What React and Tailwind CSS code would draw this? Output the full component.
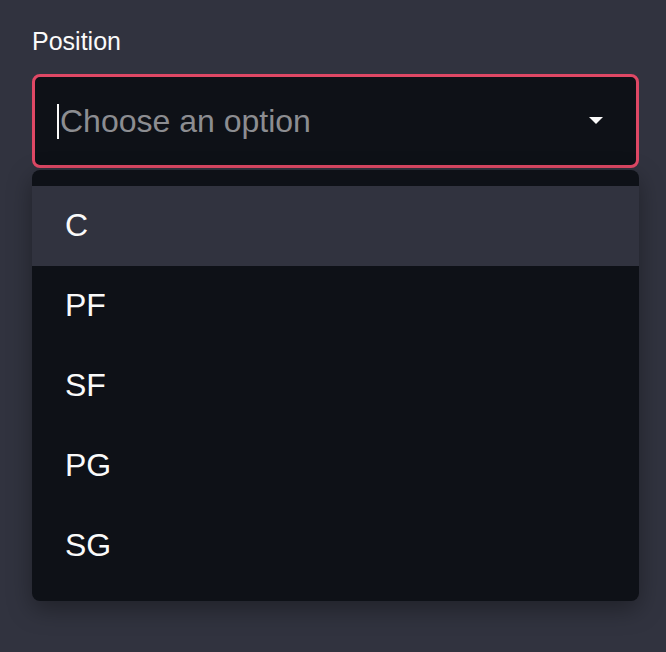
import React from 'react';

const options = ['C', 'PF', 'SF', 'PG', 'SG'];

export default function App() {
  return (
    <div
      className="w-[666px] h-[652px] bg-[#31333f] px-[32px] pt-[26px] overflow-hidden"
      style={{ fontFamily: '"Liberation Sans", Arial, sans-serif' }}
    >
      <label className="block text-[25px] leading-[30px] text-[#fafafa]">Position</label>

      {/* select box */}
      <div className="mt-[18px] h-[94px] w-[607px] rounded-[8px] border-[3px] border-[#df4865] bg-[#0e1117] flex items-center pl-[22px] pr-[32px]">
        <div className="w-[2px] h-[35px] bg-[#fafafa]" />
        <span className="ml-[1px] text-[32px] leading-none text-[#8c8d91]">Choose an option</span>
        <svg className="ml-auto" width="16" height="8" viewBox="0 0 16 8">
          <polygon points="1,0 15,0 8,7" fill="#fafafa" />
        </svg>
      </div>

      {/* dropdown menu */}
      <ul className="mt-[2px] w-[607px] rounded-[8px] bg-[#0e1117] pt-[16px] pb-[15px] shadow-[0_8px_24px_rgba(0,0,0,0.35)]">
        {options.map((opt, i) => (
          <li
            key={opt}
            className={`h-[80px] flex items-center pl-[33px] pb-[2px] text-[32px] text-[#fafafa] ${
              i === 0 ? 'bg-[#31333f]' : ''
            }`}
          >
            {opt}
          </li>
        ))}
      </ul>
    </div>
  );
}
